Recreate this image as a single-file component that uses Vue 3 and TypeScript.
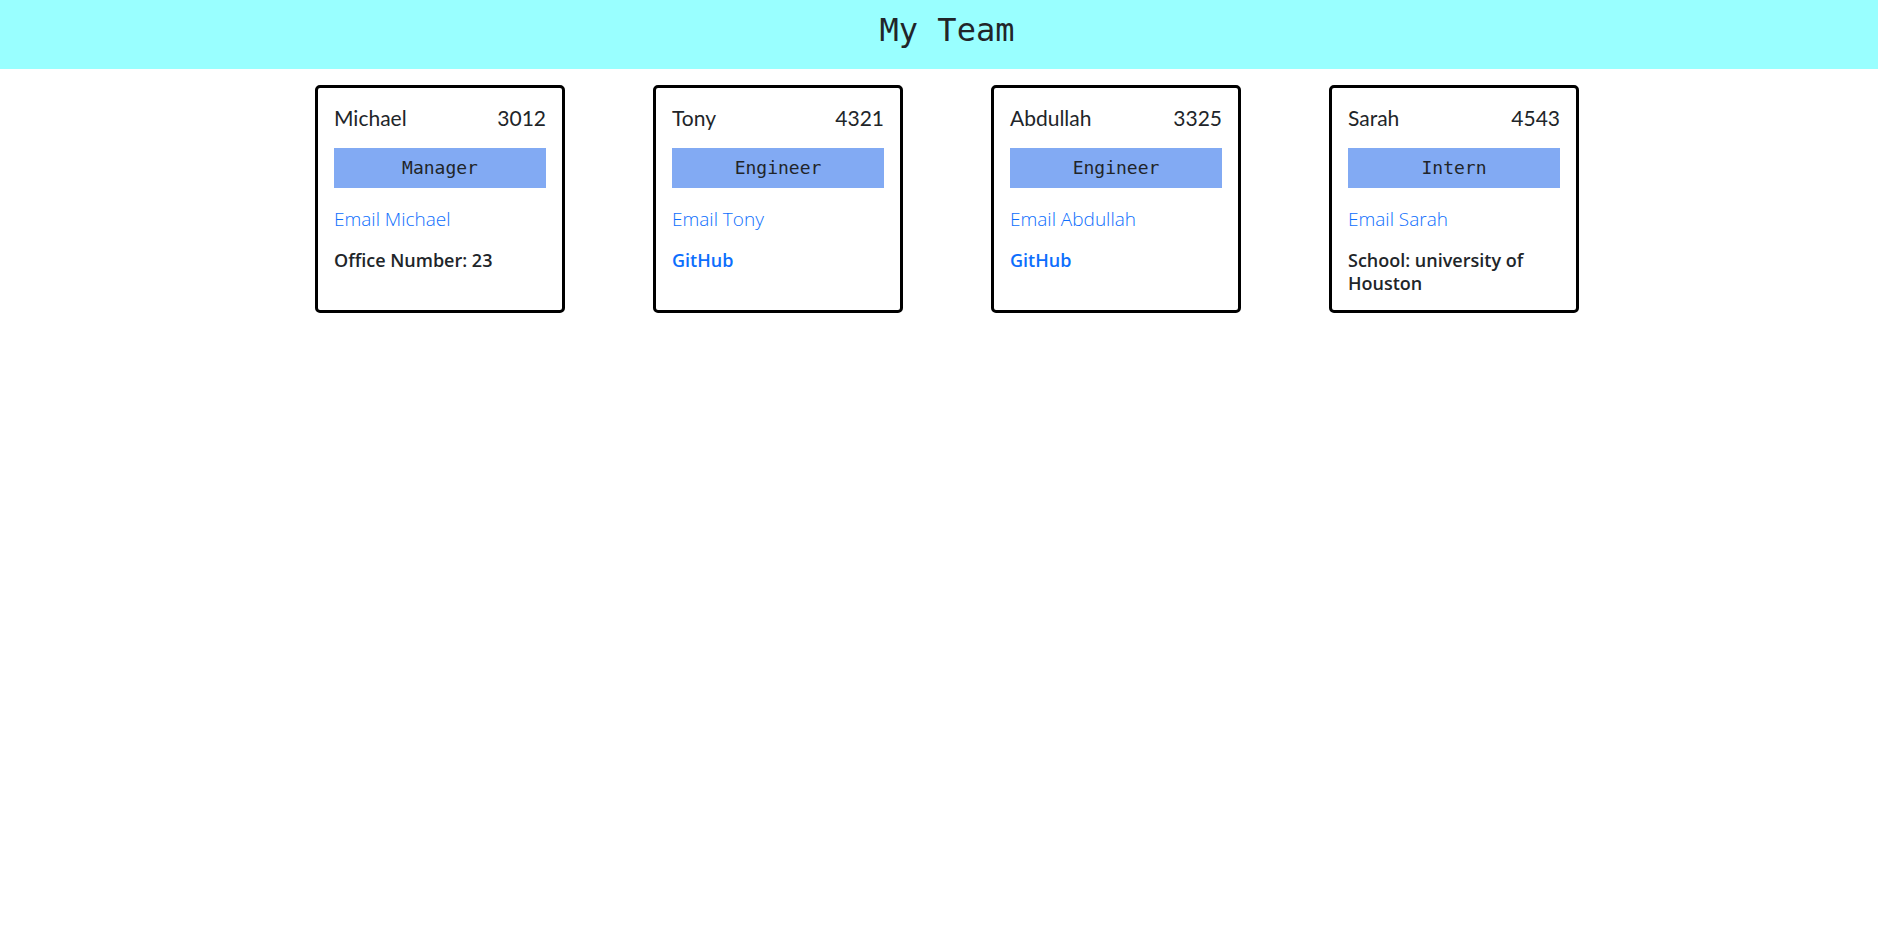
<script setup lang="ts">
interface Member {
  name: string
  id: string
  role: string
  email: string
  github?: string
  detail?: string
}

const team: Member[] = [
  { name: 'Michael', id: '3012', role: 'Manager', email: 'michael@team.test', detail: 'Office Number: 23' },
  { name: 'Tony', id: '4321', role: 'Engineer', email: 'tony@team.test', github: 'tony' },
  { name: 'Abdullah', id: '3325', role: 'Engineer', email: 'abdullah@team.test', github: 'abdullah' },
  { name: 'Sarah', id: '4543', role: 'Intern', email: 'sarah@team.test', detail: 'School: university of Houston' },
]
</script>

<template>
  <div class="page">
    <header class="header">
      <h1>My Team</h1>
    </header>
    <main class="team">
      <article v-for="member in team" :key="member.id" class="card">
        <h2 class="heading">
          <span>{{ member.name }}</span>
          <span>{{ member.id }}</span>
        </h2>
        <p class="role">{{ member.role }}</p>
        <a class="email" :href="`mailto:${member.email}`">Email {{ member.name }}</a>
        <p class="detail">
          <a v-if="member.github" :href="`https://github.com/${member.github}`">GitHub</a>
          <template v-else>{{ member.detail }}</template>
        </p>
      </article>
    </main>
  </div>
</template>

<style>
body {
  margin: 0;
  background: #fff;
}
</style>

<style scoped>
.page {
  color: #212529;
  font-family: "Open Sans", sans-serif;
}

.header {
  padding: 11px 0 20px 16px;
  background: #99ffff;
  text-align: center;
}

h1 {
  margin: 0;
  font: 400 32px/38px "DejaVu Sans Mono", monospace;
}

.team {
  display: flex;
  flex-wrap: wrap;
  justify-content: center;
  gap: 16px 88px;
  padding: 16px 0 16px 16px;
}

.card {
  box-sizing: border-box;
  width: 250px;
  padding: 16px 16px 15px;
  border: 3px solid #000;
  border-radius: 5px;
}

.heading {
  display: flex;
  justify-content: space-between;
  margin: 0 0 16px;
  font: 400 21px/28px Lato, sans-serif;
}

.role {
  margin: 0 0 20px;
  background: #82aaf3;
  font: 400 18px/40px "DejaVu Sans Mono", monospace;
  text-align: center;
}

a {
  color: #0d6efd;
  text-decoration: none;
}

.email {
  display: block;
  margin-bottom: 18px;
  font-size: 19px;
  font-weight: 300;
  line-height: 23px;
}

.detail {
  margin: 0;
  font-size: 18px;
  font-weight: 600;
  line-height: 23px;
}
</style>
